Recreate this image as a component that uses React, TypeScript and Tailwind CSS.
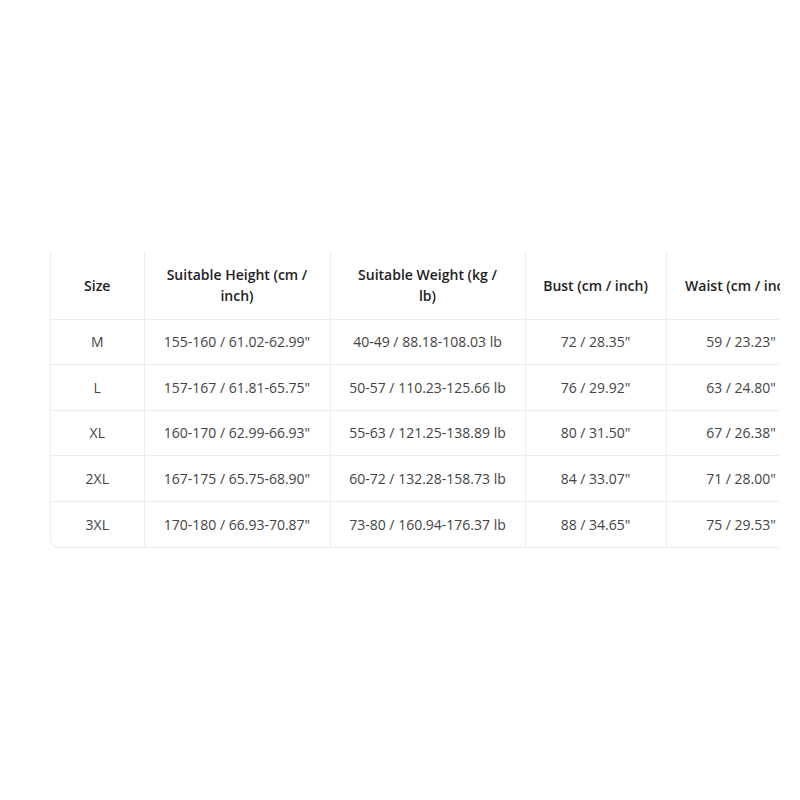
import React from 'react';

const headers = [
  'Size',
  'Suitable Height (cm / inch)',
  'Suitable Weight (kg / lb)',
  'Bust (cm / inch)',
  'Waist (cm / inch)',
  'Hip (cm / inch)',
];

const widths = ['w-[93px]', 'w-[186px]', 'w-[195px]', 'w-[141px]', 'w-[150px]', 'w-[140px]'];

const rows = [
  ['M', '155-160 / 61.02-62.99"', '40-49 / 88.18-108.03 lb', '72 / 28.35"', '59 / 23.23"', '82 / 32.28"'],
  ['L', '157-167 / 61.81-65.75"', '50-57 / 110.23-125.66 lb', '76 / 29.92"', '63 / 24.80"', '86 / 33.86"'],
  ['XL', '160-170 / 62.99-66.93"', '55-63 / 121.25-138.89 lb', '80 / 31.50"', '67 / 26.38"', '90 / 35.43"'],
  ['2XL', '167-175 / 65.75-68.90"', '60-72 / 132.28-158.73 lb', '84 / 33.07"', '71 / 28.00"', '94 / 37.01"'],
  ['3XL', '170-180 / 66.93-70.87"', '73-80 / 160.94-176.37 lb', '88 / 34.65"', '75 / 29.53"', '98 / 38.58"'],
];

export default function App() {
  return (
    <div className="min-h-[800px] bg-white pt-[252px] pl-[50px] font-['Open_Sans',sans-serif]">
      <div className="w-[730px] overflow-hidden border-l border-b border-[#ececec] rounded-bl-lg">
        <table className="table-fixed border-collapse w-[905px] text-[14px] leading-[21px]">
          <colgroup>
            {widths.map((w, i) => (
              <col key={i} className={w} />
            ))}
          </colgroup>
          <thead>
            <tr className="h-[67px]">
              {headers.map((h, i) => (
                <th
                  key={i}
                  className={`py-3 text-center font-semibold text-[#222] align-middle ${i === 2 ? 'px-6' : 'px-4'} ${i > 0 ? 'border-l border-[#ececec]' : ''}`}
                >
                  {h}
                </th>
              ))}
            </tr>
          </thead>
          <tbody>
            {rows.map((r, ri) => (
              <tr key={ri} className="h-[45.6px] border-t border-[#ececec]">
                {r.map((c, ci) => (
                  <td
                    key={ci}
                    className={`px-4 py-0 text-center text-[#444] whitespace-nowrap ${ci > 0 ? 'border-l border-[#ececec]' : ''}`}
                  >
                    {c}
                  </td>
                ))}
              </tr>
            ))}
          </tbody>
        </table>
      </div>
    </div>
  );
}
